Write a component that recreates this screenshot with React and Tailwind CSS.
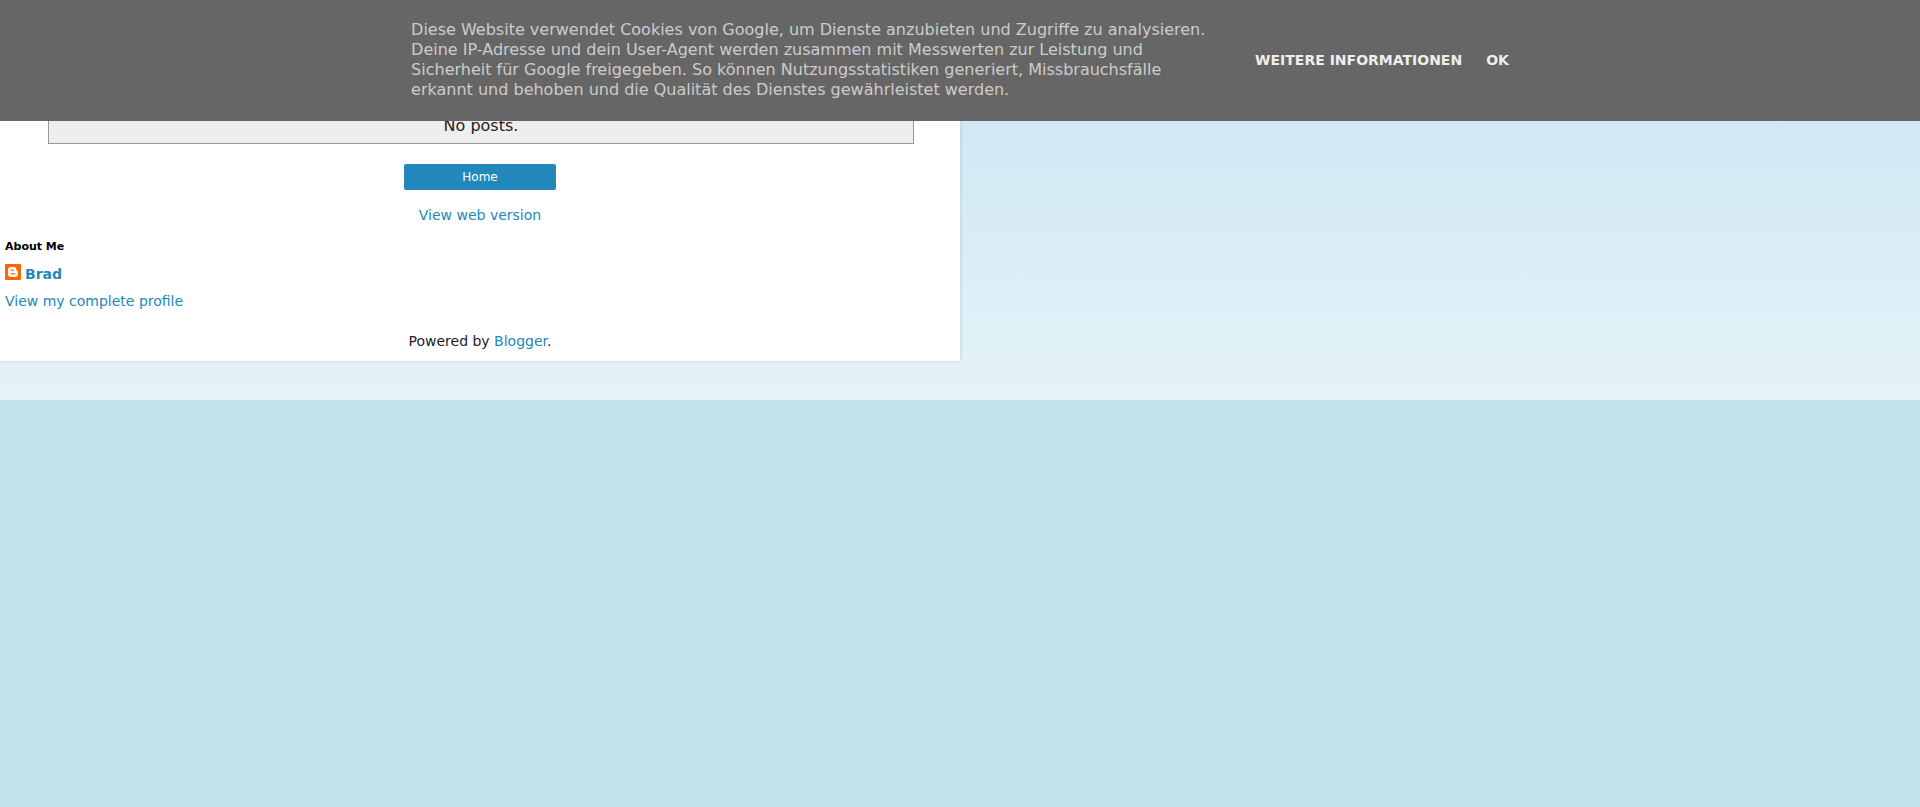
const linkClass = 'text-[#2288bb] hover:text-[#33aaff]'

export default function App() {
  return (
    <div className="min-h-screen bg-[#c2e4ef] font-['DejaVu_Sans',sans-serif] text-sm leading-5 text-[#222222]">
      <CookieBanner />

      <div className="bg-linear-to-b from-[#c6e4f0] to-[#e5f3f9] pb-[39px]">
        <main className="w-1/2 bg-white pt-20 pb-2.5 shadow-[0_0_4px_rgba(0,0,0,0.15)]">
          <p className="mr-[46px] ml-12 border border-[#999999] bg-[#eeeeee] pt-[35px] pb-[7px] text-center text-base leading-5">
            No posts.
          </p>

          <nav className="mt-5 flex flex-col items-center gap-[15px]">
            <a
              href="#home"
              className="w-[152px] rounded-xs bg-[#2288bb] py-[3px] text-center text-xs leading-5 text-white"
            >
              Home
            </a>
            <a href="#web" className={linkClass}>View web version</a>
          </nav>

          <AboutMe />

          <footer className="mt-5 text-center">
            Powered by <a href="#blogger" className={linkClass}>Blogger</a>.
          </footer>
        </main>
      </div>
    </div>
  )
}

function CookieBanner() {
  return (
    <div className="fixed inset-x-0 top-0 z-10 flex items-center justify-center bg-[#666666] pt-5 pb-[21px]">
      <p className="w-[800px] text-base leading-5 text-[#cccccc]">
        Diese Website verwendet Cookies von Google, um Dienste anzubieten und Zugriffe zu analysieren.
        Deine IP-Adresse und dein User-Agent werden zusammen mit Messwerten zur Leistung und
        Sicherheit für Google freigegeben. So können Nutzungsstatistiken generiert, Missbrauchsfälle
        erkannt und behoben und die Qualität des Dienstes gewährleistet werden.
      </p>
      <div className="ml-11 flex gap-6 font-bold text-[#eeeeee] uppercase">
        <a href="#info">Weitere Informationen</a>
        <a href="#ok">OK</a>
      </div>
    </div>
  )
}

function AboutMe() {
  return (
    <section className="mt-[14px] px-[5px]">
      <h2 className="text-[11px] leading-4 font-bold text-black">About Me</h2>
      <a href="#brad" className={`mt-[9px] flex gap-1 font-bold ${linkClass}`}>
        <BloggerIcon />
        Brad
      </a>
      <a href="#profile" className={`mt-[7px] block ${linkClass}`}>View my complete profile</a>
    </section>
  )
}

function BloggerIcon() {
  return (
    <svg viewBox="0 0 16 16" className="size-4" aria-hidden="true">
      <rect width="16" height="16" rx="1" fill="#ff6600" />
      <path
        d="M6 3h2.600C10.400 3 11.500 4.200 11.500 5.800c0 .8.200 1.100.8 1.100.5 0 .7.300.7.800V10c0 1.800-1.200 3-3 3H6c-1.800 0-3-1.200-3-3V6c0-1.800 1.200-3 3-3z"
        fill="#fff"
      />
      <path d="M6.200 6.200h2.200M6.200 9.800h3.600" stroke="#ff6600" strokeWidth="1.300" strokeLinecap="round" />
    </svg>
  )
}
